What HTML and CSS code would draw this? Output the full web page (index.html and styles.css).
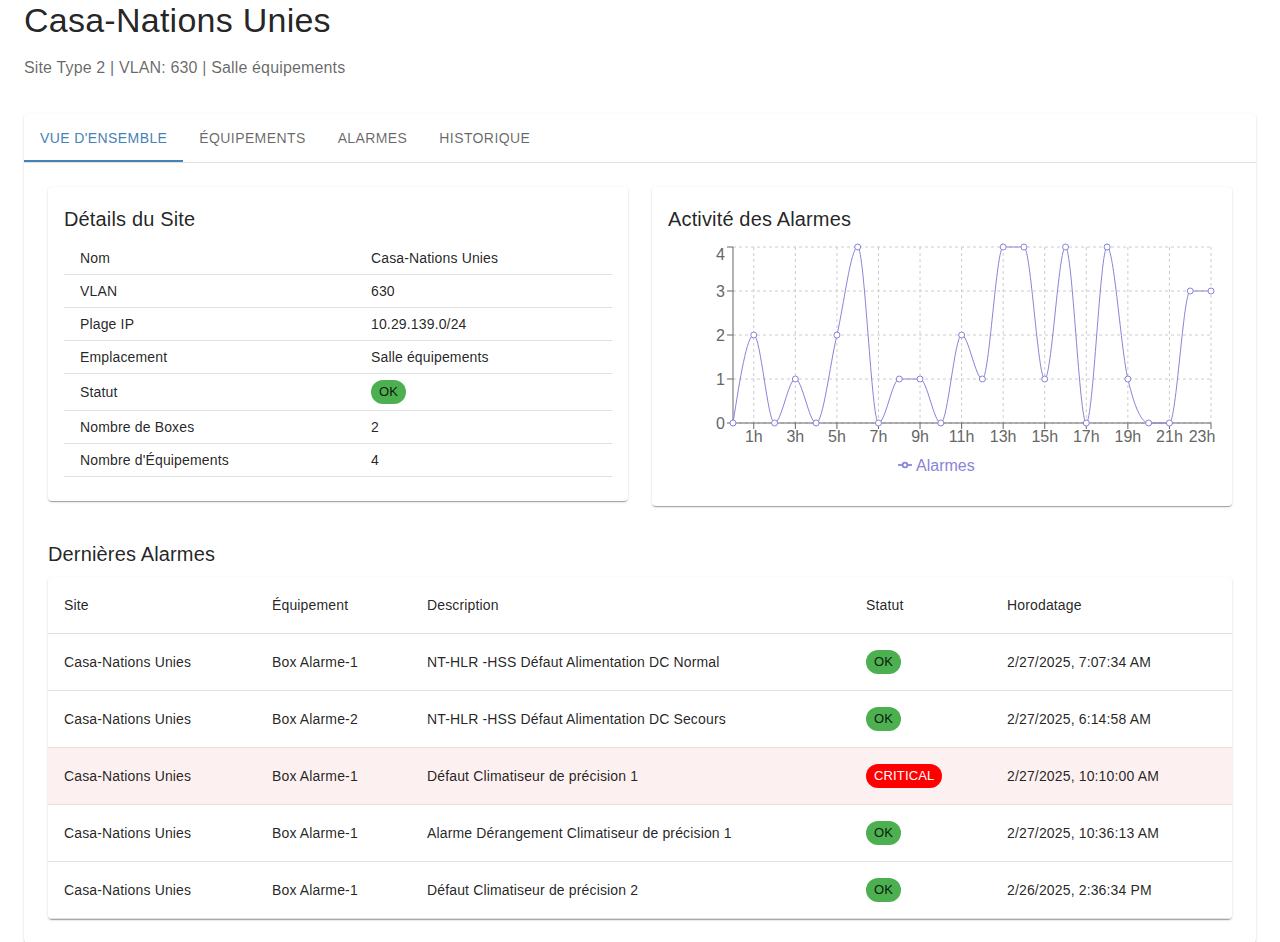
FILE: index.html
```html
<!DOCTYPE html>
<html lang="fr">
<head>
<meta charset="utf-8">
<title>Casa-Nations Unies</title>
<link rel="stylesheet" href="styles.css">
</head>
<body>
<div class="page">
  <h1 class="title">Casa-Nations Unies</h1>
  <p class="subtitle">Site Type 2 | VLAN: 630 | Salle équipements</p>

  <div class="paper main">
    <div class="tabs">
      <button class="tab active">Vue d'ensemble</button>
      <button class="tab">Équipements</button>
      <button class="tab">Alarmes</button>
      <button class="tab">Historique</button>
    </div>

    <div class="panel">
      <div class="grid2">
        <div class="paper card">
          <h2 class="card-title">Détails du Site</h2>
          <table class="details">
            <colgroup><col class="col-label"><col></colgroup>
            <tbody>
              <tr><td>Nom</td><td>Casa-Nations Unies</td></tr>
              <tr><td>VLAN</td><td>630</td></tr>
              <tr><td>Plage IP</td><td>10.29.139.0/24</td></tr>
              <tr><td>Emplacement</td><td>Salle équipements</td></tr>
              <tr><td>Statut</td><td><span class="chip ok">OK</span></td></tr>
              <tr><td>Nombre de Boxes</td><td>2</td></tr>
              <tr><td>Nombre d'Équipements</td><td>4</td></tr>
            </tbody>
          </table>
        </div>

        <div class="paper card">
          <h2 class="card-title">Activité des Alarmes</h2>
          <svg class="chart" width="548" height="240" viewBox="0 0 548 240">
            <g class="grid">
              <line x1="65" y1="5" x2="543" y2="5"/>
              <line x1="65" y1="49" x2="543" y2="49"/>
              <line x1="65" y1="93" x2="543" y2="93"/>
              <line x1="65" y1="137" x2="543" y2="137"/>
              <line x1="65" y1="181" x2="543" y2="181"/>
              <line x1="85.78" y1="5" x2="85.78" y2="181"/>
              <line x1="127.35" y1="5" x2="127.35" y2="181"/>
              <line x1="168.91" y1="5" x2="168.91" y2="181"/>
              <line x1="210.48" y1="5" x2="210.48" y2="181"/>
              <line x1="252.04" y1="5" x2="252.04" y2="181"/>
              <line x1="293.61" y1="5" x2="293.61" y2="181"/>
              <line x1="335.17" y1="5" x2="335.17" y2="181"/>
              <line x1="376.74" y1="5" x2="376.74" y2="181"/>
              <line x1="418.30" y1="5" x2="418.30" y2="181"/>
              <line x1="459.87" y1="5" x2="459.87" y2="181"/>
              <line x1="501.43" y1="5" x2="501.43" y2="181"/>
              <line x1="543" y1="5" x2="543" y2="181"/>
            </g>
            <g class="axis">
              <line x1="65" y1="5" x2="65" y2="181"/>
              <line x1="59" y1="5" x2="65" y2="5"/>
              <line x1="59" y1="49" x2="65" y2="49"/>
              <line x1="59" y1="93" x2="65" y2="93"/>
              <line x1="59" y1="137" x2="65" y2="137"/>
              <line x1="59" y1="181" x2="65" y2="181"/>
              <line x1="65" y1="181" x2="543" y2="181"/>
              <line x1="85.78" y1="181" x2="85.78" y2="187"/>
              <line x1="127.35" y1="181" x2="127.35" y2="187"/>
              <line x1="168.91" y1="181" x2="168.91" y2="187"/>
              <line x1="210.48" y1="181" x2="210.48" y2="187"/>
              <line x1="252.04" y1="181" x2="252.04" y2="187"/>
              <line x1="293.61" y1="181" x2="293.61" y2="187"/>
              <line x1="335.17" y1="181" x2="335.17" y2="187"/>
              <line x1="376.74" y1="181" x2="376.74" y2="187"/>
              <line x1="418.30" y1="181" x2="418.30" y2="187"/>
              <line x1="459.87" y1="181" x2="459.87" y2="187"/>
              <line x1="501.43" y1="181" x2="501.43" y2="187"/>
              <line x1="543" y1="181" x2="543" y2="187"/>
            </g>
            <g class="ylabels">
              <text x="57" y="18">4</text>
              <text x="57" y="55">3</text>
              <text x="57" y="99">2</text>
              <text x="57" y="143">1</text>
              <text x="57" y="187">0</text>
            </g>
            <g class="xlabels">
              <text x="85.78" y="200">1h</text>
              <text x="127.35" y="200">3h</text>
              <text x="168.91" y="200">5h</text>
              <text x="210.48" y="200">7h</text>
              <text x="252.04" y="200">9h</text>
              <text x="293.61" y="200">11h</text>
              <text x="335.17" y="200">13h</text>
              <text x="376.74" y="200">15h</text>
              <text x="418.30" y="200">17h</text>
              <text x="459.87" y="200">19h</text>
              <text x="501.43" y="200">21h</text>
              <text x="534" y="200">23h</text>
            </g>
            <path id="alarm-line" class="series" d=""/>
            <g id="alarm-dots" class="dots"></g>
            <g class="legend">
              <line x1="230" y1="223" x2="244" y2="223"/>
              <circle cx="237" cy="223" r="2.4"/>
              <text x="248" y="229">Alarmes</text>
            </g>
          </svg>
        </div>
      </div>

      <h2 class="section-title">Dernières Alarmes</h2>
      <div class="paper table-card">
        <table class="alarms">
          <colgroup>
            <col class="c-site"><col class="c-eq"><col class="c-desc"><col class="c-stat"><col class="c-time">
          </colgroup>
          <thead>
            <tr><th>Site</th><th>Équipement</th><th>Description</th><th>Statut</th><th>Horodatage</th></tr>
          </thead>
          <tbody>
            <tr><td>Casa-Nations Unies</td><td>Box Alarme-1</td><td>NT-HLR -HSS Défaut Alimentation DC Normal</td><td><span class="chip ok">OK</span></td><td>2/27/2025, 7:07:34 AM</td></tr>
            <tr><td>Casa-Nations Unies</td><td>Box Alarme-2</td><td>NT-HLR -HSS Défaut Alimentation DC Secours</td><td><span class="chip ok">OK</span></td><td>2/27/2025, 6:14:58 AM</td></tr>
            <tr class="row-critical"><td>Casa-Nations Unies</td><td>Box Alarme-1</td><td>Défaut Climatiseur de précision 1</td><td><span class="chip critical">CRITICAL</span></td><td>2/27/2025, 10:10:00 AM</td></tr>
            <tr><td>Casa-Nations Unies</td><td>Box Alarme-1</td><td>Alarme Dérangement Climatiseur de précision 1</td><td><span class="chip ok">OK</span></td><td>2/27/2025, 10:36:13 AM</td></tr>
            <tr><td>Casa-Nations Unies</td><td>Box Alarme-1</td><td>Défaut Climatiseur de précision 2</td><td><span class="chip ok">OK</span></td><td>2/26/2025, 2:36:34 PM</td></tr>
          </tbody>
        </table>
      </div>
    </div>
  </div>
</div>
<script src="script.js"></script>
</body>
</html>
```

FILE: styles.css
```css
* { box-sizing: border-box; }
html, body { margin: 0; padding: 0; background: #fff; }
body {
  font-family: "Liberation Sans", Arial, Helvetica, sans-serif;
  color: rgba(0, 0, 0, 0.87);
  overflow: hidden;
}
.page { padding: 0 24px; }
.title {
  font-size: 34px;
  font-weight: 400;
  line-height: 1.235;
  letter-spacing: 0.00735em;
  margin: 0 0 14px;
}
.subtitle {
  font-size: 16px;
  line-height: 24px;
  letter-spacing: 0.00938em;
  color: rgba(0, 0, 0, 0.6);
  margin: 0 0 34px;
}
.paper {
  background: #fff;
  border-radius: 4px;
  box-shadow: 0 2px 1px -1px rgba(0,0,0,0.2), 0 1px 1px 0 rgba(0,0,0,0.14), 0 1px 3px 0 rgba(0,0,0,0.12);
}
.tabs {
  display: flex;
  border-bottom: 1px solid #e0e0e0;
}
.tab {
  position: relative;
  min-width: 90px;
  height: 48px;
  padding: 13px 16px 11px;
  border: 0;
  background: none;
  font-family: inherit;
  font-size: 14px;
  font-weight: 400;
  line-height: 1.25;
  letter-spacing: 0.02857em;
  text-transform: uppercase;
  color: rgba(0, 0, 0, 0.6);
}
.tab.active { color: #4682b4; }
.tab.active::after {
  content: "";
  position: absolute;
  left: 0; right: 0; bottom: 0;
  height: 2px;
  background: #4682b4;
}
.panel { padding: 24px; }
.grid2 {
  display: grid;
  grid-template-columns: 1fr 1fr;
  gap: 24px;
  align-items: start;
}
.card { padding: 16px 16px 24px; }
.card-title, .section-title {
  font-size: 20px;
  font-weight: 400;
  line-height: 32px;
  letter-spacing: 0.0075em;
  margin: 0 0 7px;
}
.section-title { margin-top: 32px; }

table { border-collapse: collapse; width: 100%; }
.details .col-label { width: 291px; }
.details td {
  padding: 6px 16px;
  font-size: 14px;
  line-height: 20px;
  letter-spacing: 0.01071em;
  border-bottom: 1px solid #e0e0e0;
  text-align: left;
}
.chip {
  display: inline-flex;
  align-items: center;
  vertical-align: top;
  height: 24px;
  padding: 0 8px;
  border-radius: 12px;
  font-size: 13px;
  line-height: 1;
}
.chip.ok { background: #4caf50; color: rgba(0, 0, 0, 0.87); }
.chip.critical { background: #ff0000; color: #fff; }

.chart { display: block; font-family: "Liberation Sans", Arial, Helvetica, sans-serif; }
.chart .grid line { stroke: #ccc; stroke-dasharray: 3 3; }
.chart .axis line { stroke: #666; }
.chart text { font-size: 16px; fill: #666; }
.chart .ylabels text { text-anchor: end; }
.chart .xlabels text { text-anchor: middle; }
.chart .series { fill: none; stroke: #8884d8; stroke-width: 1; }
.chart .dots circle { fill: #fff; stroke: #8884d8; stroke-width: 1; }
.chart .legend line { stroke: #8884d8; stroke-width: 1.75; }
.chart .legend circle { fill: #fff; stroke: #8884d8; stroke-width: 1.75; }
.chart .legend text { fill: #8884d8; }

.table-card { overflow: hidden; }
.alarms .c-site { width: 208px; }
.alarms .c-eq { width: 155px; }
.alarms .c-desc { width: 439px; }
.alarms .c-stat { width: 141px; }
.alarms th, .alarms td {
  padding: 16px;
  font-size: 14px;
  font-weight: 400;
  line-height: 24px;
  letter-spacing: 0.01071em;
  text-align: left;
  border-bottom: 1px solid #e0e0e0;
}
.alarms .row-critical td { background: #fdf0f0; }
```

FILE: script.js
```js
(function () {
  var data = [0, 2, 0, 1, 0, 2, 4, 0, 1, 1, 0, 2, 1, 4, 4, 1, 4, 0, 4, 1, 0, 0, 3, 3];
  var X0 = 65, X1 = 543, Y0 = 181, U = 44;
  var n = data.length;
  var pts = data.map(function (v, i) {
    return [X0 + i * (X1 - X0) / (n - 1), Y0 - v * U];
  });
  function sign(x) { return x < 0 ? -1 : 1; }
  function slope3(a, b, c) {
    var h0 = b[0] - a[0], h1 = c[0] - b[0];
    var s0 = (b[1] - a[1]) / h0, s1 = (c[1] - b[1]) / h1;
    var p = (s0 * h1 + s1 * h0) / (h0 + h1);
    return (sign(s0) + sign(s1)) * Math.min(Math.abs(s0), Math.abs(s1), 0.5 * Math.abs(p)) || 0;
  }
  function slope2(a, b, t) {
    var h = b[0] - a[0];
    return h ? (3 * (b[1] - a[1]) / h - t) / 2 : t;
  }
  var t = [];
  for (var i = 1; i < n - 1; i++) t[i] = slope3(pts[i - 1], pts[i], pts[i + 1]);
  t[0] = slope2(pts[0], pts[1], t[1]);
  t[n - 1] = slope2(pts[n - 2], pts[n - 1], t[n - 2]);
  var d = 'M' + pts[0][0].toFixed(2) + ',' + pts[0][1].toFixed(2);
  for (var j = 0; j < n - 1; j++) {
    var a = pts[j], b = pts[j + 1], dx = (b[0] - a[0]) / 3;
    d += 'C' + (a[0] + dx).toFixed(2) + ',' + (a[1] + dx * t[j]).toFixed(2) + ' ' +
      (b[0] - dx).toFixed(2) + ',' + (b[1] - dx * t[j + 1]).toFixed(2) + ' ' +
      b[0].toFixed(2) + ',' + b[1].toFixed(2);
  }
  document.getElementById('alarm-line').setAttribute('d', d);
  var g = document.getElementById('alarm-dots');
  var NS = 'http://www.w3.org/2000/svg';
  pts.forEach(function (p) {
    var c = document.createElementNS(NS, 'circle');
    c.setAttribute('cx', p[0].toFixed(2));
    c.setAttribute('cy', p[1].toFixed(2));
    c.setAttribute('r', '3');
    g.appendChild(c);
  });
})();
```
